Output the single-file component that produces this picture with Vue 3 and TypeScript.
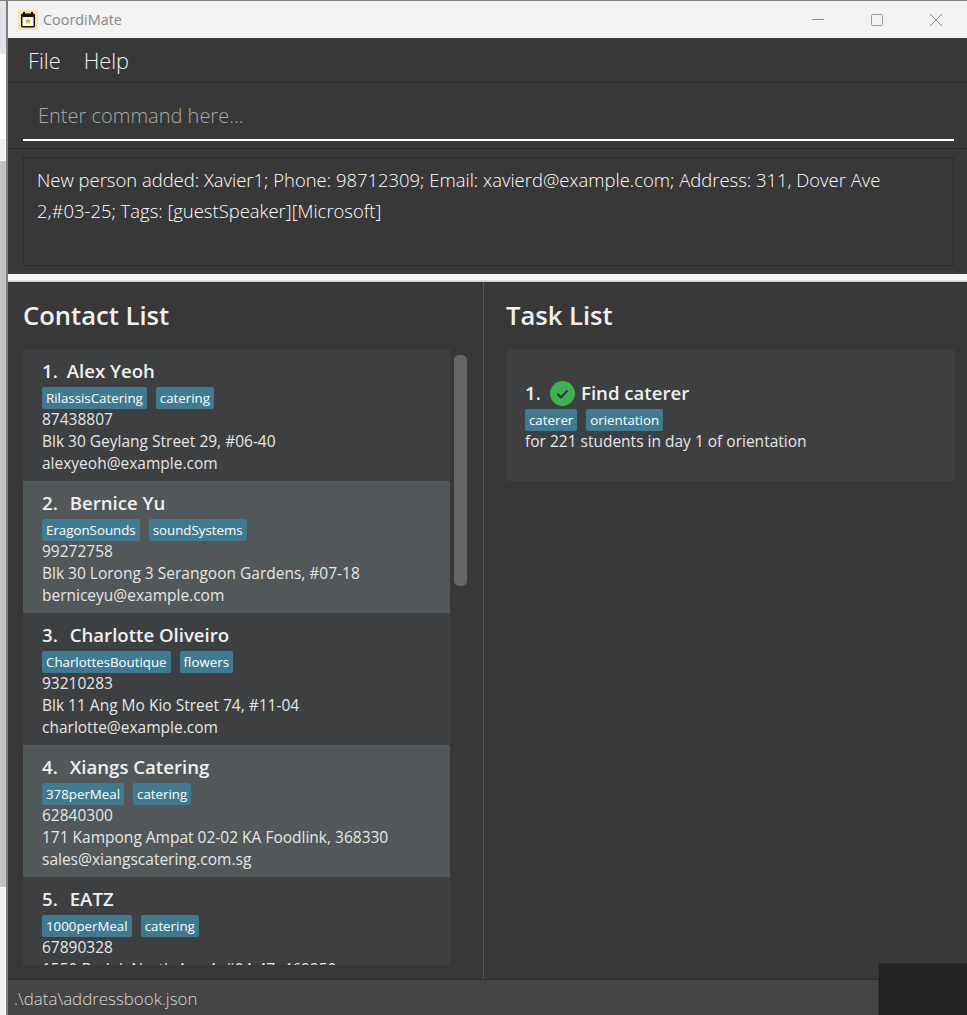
<script setup lang="ts">
interface Contact { name: string; tags: string[]; phone: string; address: string; email?: string }
const contacts: Contact[] = [
  { name: 'Alex Yeoh', tags: ['RilassisCatering', 'catering'], phone: '87438807', address: 'Blk 30 Geylang Street 29, #06-40', email: 'alexyeoh@example.com' },
  { name: 'Bernice Yu', tags: ['EragonSounds', 'soundSystems'], phone: '99272758', address: 'Blk 30 Lorong 3 Serangoon Gardens, #07-18', email: 'berniceyu@example.com' },
  { name: 'Charlotte Oliveiro', tags: ['CharlottesBoutique', 'flowers'], phone: '93210283', address: 'Blk 11 Ang Mo Kio Street 74, #11-04', email: 'charlotte@example.com' },
  { name: 'Xiangs Catering', tags: ['378perMeal', 'catering'], phone: '62840300', address: '171 Kampong Ampat 02-02 KA Foodlink, 368330', email: 'sales@xiangscatering.com.sg' },
  { name: 'EATZ', tags: ['1000perMeal', 'catering'], phone: '67890328', address: '1550 Bedok North Ave 4, #04-47, 469950' },
]
</script>

<template>
  <div class="screen">
    <div class="desktop">
      <div class="strip s1"></div>
      <div class="strip s2"></div>
      <div class="strip s3"></div>
      <div class="strip s4"></div>
      <div class="strip s5"></div>
    </div>
    <div class="window">
      <header class="titlebar">
        <svg class="appicon" width="20" height="20" viewBox="0 0 20 20">
          <rect x="0" y="0" width="20" height="20" rx="2.5" fill="#f6dfb0" />
          <rect x="3" y="3.5" width="14" height="14" rx="1.5" fill="#141414" />
          <rect x="5" y="2" width="2" height="3" fill="#141414" />
          <rect x="13" y="2" width="2" height="3" fill="#141414" />
          <rect x="4.5" y="7" width="11" height="9" fill="#fff" />
          <path d="M10 8l1 2.1 2.2.3-1.6 1.5.4 2.2-2-1.1-2 1.1.4-2.2-1.6-1.5 2.2-.3z" fill="#f5b311" />
        </svg>
        <span class="apptitle">CoordiMate</span>
        <div class="controls">
          <svg width="14" height="14" viewBox="0 0 14 14"><path d="M1 6.5h12" stroke="#8c8c8c" stroke-width="1" /></svg>
          <svg width="14" height="14" viewBox="0 0 14 14"><rect x="1.5" y="1.5" width="11" height="11" rx="1" fill="none" stroke="#9a9a9a" stroke-width="1" /></svg>
          <svg width="14" height="14" viewBox="0 0 14 14"><path d="M1 1l12 12M13 1L1 13" stroke="#8c8c8c" stroke-width="1" /></svg>
        </div>
      </header>

      <nav class="menubar">
        <span>File</span>
        <span>Help</span>
      </nav>

      <section class="command">
        <div class="command-input">Enter command here...</div>
      </section>

      <section class="result">
        <div class="result-box">New person added: Xavier1; Phone: 98712309; Email: xavierd@example.com; Address: 311, Dover Ave <span class="keep">2,#03-25;</span> Tags: [guestSpeaker][Microsoft]</div>
      </section>

      <div class="splitter"></div>

      <main class="lists">
        <section class="col col-left">
          <h2>Contact List</h2>
          <div class="listview">
            <div class="cards">
              <article v-for="(c, i) in contacts" :key="c.name" class="card" :class="{ alt: i % 2 === 1 }">
                <div class="name"><span class="num">{{ i + 1 }}.</span>{{ c.name }}</div>
                <div class="tags"><span v-for="t in c.tags" :key="t" class="tag">{{ t }}</span></div>
                <div class="line">{{ c.phone }}</div>
                <div class="line">{{ c.address }}</div>
                <div v-if="c.email" class="line">{{ c.email }}</div>
              </article>
            </div>
            <div class="scrolltrack"><div class="thumb"></div></div>
          </div>
        </section>
        <section class="col col-right">
          <h2>Task List</h2>
          <article class="task">
            <div class="task-head">
              <span class="name">1.</span>
              <svg class="check" width="25" height="25" viewBox="0 0 25 25">
                <circle cx="12.5" cy="12.5" r="12.5" fill="#3cb34e" />
                <path d="M7.5 13l3.4 3.4 6.6-6.8" fill="none" stroke="#33383a" stroke-width="2.2" />
              </svg>
              <span class="name">Find caterer</span>
            </div>
            <div class="tags"><span class="tag">caterer</span><span class="tag">orientation</span></div>
            <div class="line">for 221 students in day 1 of orientation</div>
          </article>
        </section>
      </main>

      <footer class="status">.\data\addressbook.json</footer>
      <div class="corner"></div>
    </div>
  </div>
</template>

<style scoped>
.screen {
  width: 967px;
  height: 1015px;
  display: flex;
  overflow: hidden;
  font-family: "Open Sans", "Noto Sans", sans-serif;
  border-top: 1px solid #7d7d7d;
  box-sizing: border-box;
}
.desktop {
  width: 6px;
  flex: none;
  display: flex;
  flex-direction: column;
}
.strip { flex: none; }
.s1 { height: 53px; background: #e1e5ea; }
.s2 { height: 85px; background: #ffffff; }
.s3 { height: 22px; background: #f0f0f0; }
.s4 { height: 726px; background: #c4c4c4; }
.s5 { flex: 1; background: #f0f0f0; }
.window {
  position: relative;
  flex: 1;
  min-width: 0;
  display: flex;
  flex-direction: column;
  border-left: 2px solid #808080;
  background: #383838;
}
.titlebar {
  height: 37px;
  flex: none;
  background: #f2f2f2;
  display: flex;
  align-items: center;
  padding-left: 10px;
}
.appicon { flex: none; margin-top: 1px; }
.apptitle {
  margin-left: 5px;
  font-size: 14.4px;
  color: #888;
}
.controls {
  margin-left: auto;
  display: flex;
  gap: 45px;
  padding-right: 24px;
}
.menubar {
  height: 45px;
  flex: none;
  box-sizing: border-box;
  display: flex;
  align-items: center;
  gap: 23px;
  padding-left: 20px;
  border-bottom: 1px solid #2c2c2c;
  font-size: 21.7px;
  font-weight: 300;
  color: #f0f0f0;
}
.command {
  height: 66px;
  flex: none;
  box-sizing: border-box;
  padding: 0 13px 0 15px;
  border-bottom: 1px solid #2c2c2c;
}
.command-input {
  height: 58px;
  box-sizing: border-box;
  padding: 16px 0 0 15px;
  font-size: 20px;
  line-height: 33px;
  font-weight: 300;
  color: #a8a8a8;
  border-bottom: 2px solid #fff;
}
.result {
  height: 125px;
  flex: none;
  box-sizing: border-box;
  padding: 8px 13px 8px 15px;
}
.result-box {
  height: 109px;
  box-sizing: border-box;
  border: 1px solid #2c2c2c;
  padding: 6px 13px;
  font-size: 18.45px;
  line-height: 31px;
  font-weight: 300;
  color: #fff;
}
.keep { white-space: nowrap; }
.splitter {
  height: 8px;
  flex: none;
  background: linear-gradient(#f6f6f6, #f6f6f6 70%, #bdbdbd);
}
.lists {
  height: 697px;
  flex: none;
  display: flex;
  border-bottom: 1px solid #2f2f2f;
}
.col { box-sizing: border-box; min-width: 0; }
.col-left {
  width: 476px;
  flex: none;
  padding-left: 15px;
  border-right: 1px solid #555;
}
.col-right {
  flex: 1;
  padding: 0 13px 0 22px;
}
h2 {
  margin: 0;
  height: 67px;
  font-size: 25.6px;
  line-height: 68px;
  font-weight: 600;
  color: #f0f0f0;
}
.listview {
  display: flex;
  height: 616px;
  overflow: hidden;
}
.cards { width: 427px; flex: none; }
.card {
  height: 132px;
  box-sizing: border-box;
  padding: 11px 19px 6px;
  background: #3d3f41;
}
.card.alt { background: #52585a; }
.name {
  font-size: 18.6px;
  line-height: 22px;
  font-weight: 600;
  color: #f0f0f0;
  white-space: nowrap;
}
.num { margin-right: 12px; }
.card:first-child .num { margin-right: 9px; }
.tags {
  display: flex;
  gap: 9px;
  margin-top: 5px;
  margin-bottom: -1px;
}
.tag {
  height: 22px;
  box-sizing: border-box;
  padding: 0 4px;
  border-radius: 2px;
  background: #3e7b91;
  color: #fff;
  font-size: 13.3px;
  line-height: 22px;
}
.line {
  font-size: 15.5px;
  line-height: 22px;
  color: #e6e6e6;
  white-space: nowrap;
}
.scrolltrack {
  margin-left: 4px;
  padding-top: 6px;
  width: 13px;
}
.thumb {
  height: 231px;
  border-radius: 5px;
  background: #666;
}
.task {
  height: 132px;
  box-sizing: border-box;
  padding: 32px 19px 0;
  background: #3d3f41;
}
.task-head {
  display: flex;
  align-items: center;
  height: 25px;
}
.task-head .name { margin-top: -2px; }
.task-head .name:first-child { width: 25px; }
.check { flex: none; margin-right: 6px; }
.task .tags { margin-top: 3px; }
.status {
  flex: 1;
  background: #454545;
  padding-left: 6px;
  font-size: 16.9px;
  line-height: 37px;
  font-weight: 300;
  color: #d6d6d6;
  overflow: hidden;
}
.corner {
  position: absolute;
  right: 0;
  bottom: 0;
  width: 89px;
  height: 52px;
  background: #232323;
  border-top: 1px solid #2d2d2d;
  border-left: 1px solid #333;
  box-sizing: border-box;
}
</style>
